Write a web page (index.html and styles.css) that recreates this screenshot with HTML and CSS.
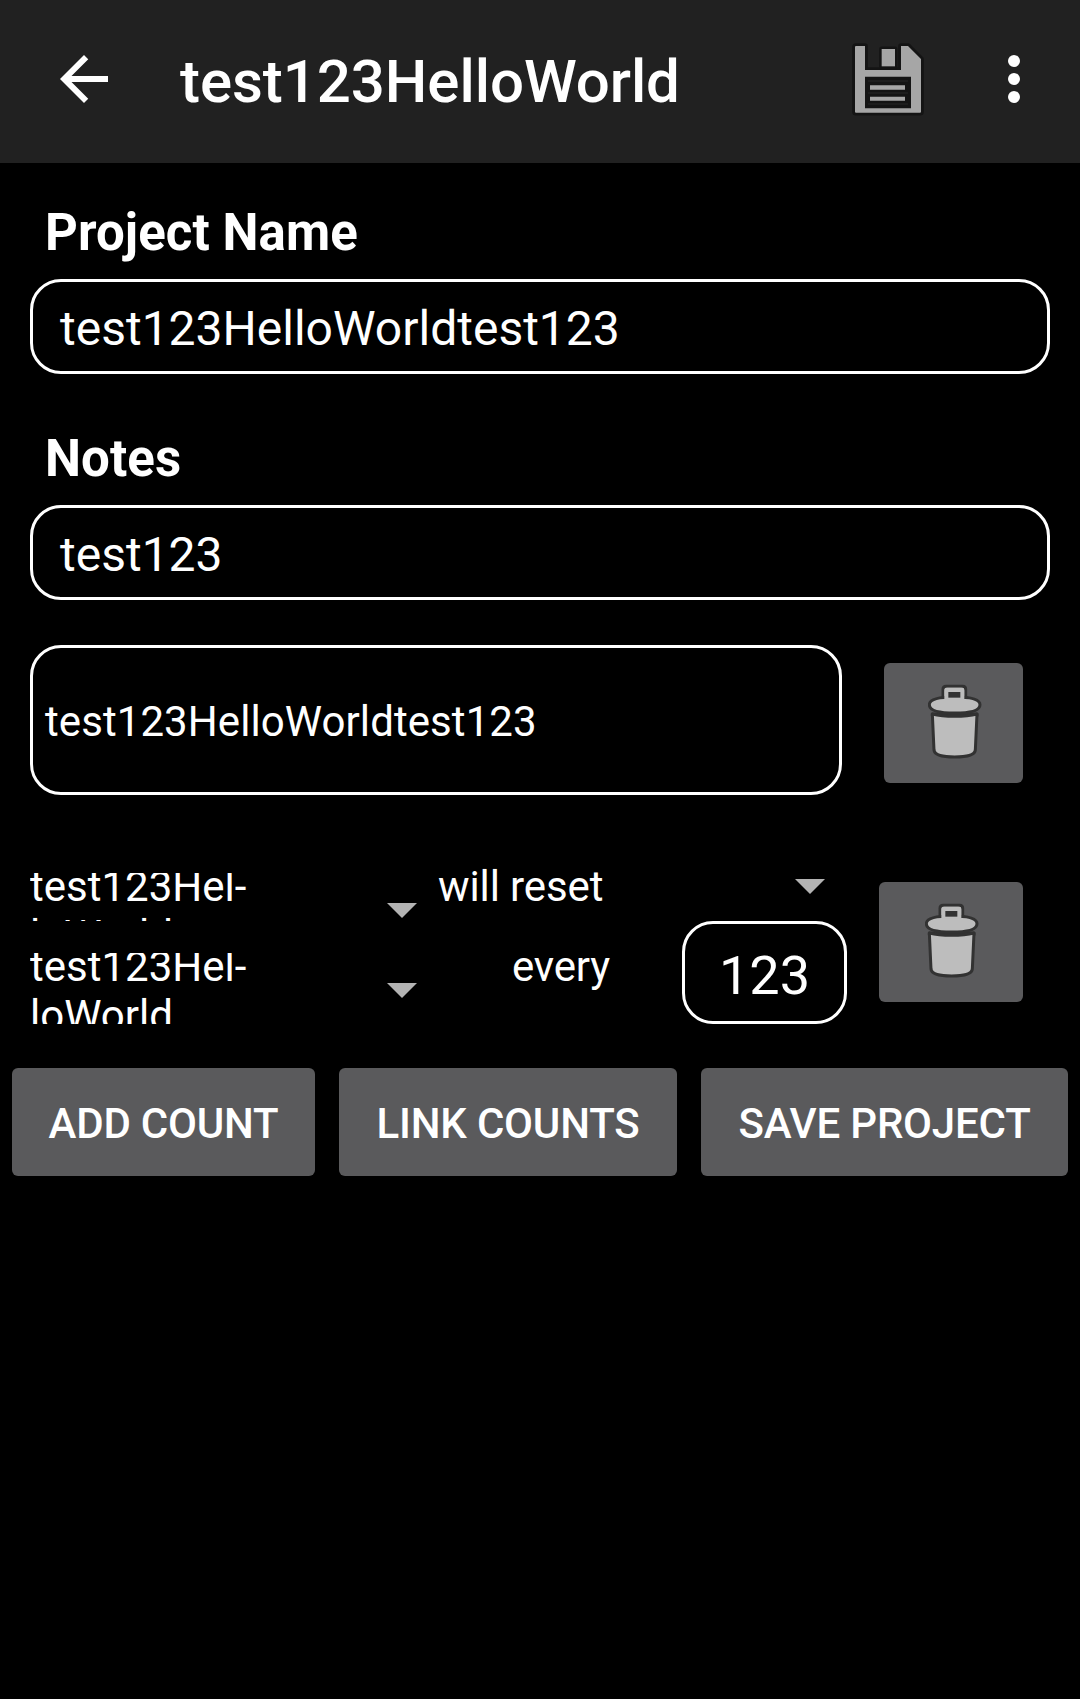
FILE: index.html
```html
<!DOCTYPE html>
<html lang="en">
<head>
<meta charset="utf-8">
<title>test123HelloWorld</title>
<link rel="stylesheet" href="styles.css">
</head>
<body>
<svg class="defs" aria-hidden="true">
  <symbol id="trash" viewBox="0 0 162 225">
    <g stroke="#323232" stroke-width="9" stroke-linejoin="round" fill="#bdbdbd">
      <path fill="#323232" d="M13 90 H147 V95 Q120 100 80 100 Q40 100 13 95Z"/>
      <path d="M13 90 L18 198 Q20 219 80 219 Q140 219 142 198 L147 90 Q120 97 80 97 Q40 97 13 90Z"/>
      <path d="M45 46 V16 Q45 7 54 7 H104 Q113 7 113 16 V46Z"/>
      <path d="M4 62 Q4 39 80 39 Q156 39 156 62 Q156 87 80 87 Q4 87 4 62Z"/>
    </g>
    <path fill="#bdbdbd" d="M49 46 V20 Q49 11 58 11 H100 Q109 11 109 20 V46Z"/>
    <path fill="#323232" d="M61 24H97V41H61Z"/>
  </symbol>
</svg>
<header class="bar">
  <svg class="back" viewBox="0 0 24 24"><path fill="#fff" d="M20 11H7.83l5.59-5.59L12 4l-8 8 8 8 1.41-1.41L7.83 13H20z"/></svg>
  <h1 class="title">test123HelloWorld</h1>
  <svg class="save" viewBox="96 66 216 222">
    <path fill="#a6a6a6" stroke="#141414" stroke-width="17" stroke-linejoin="round" paint-order="stroke" d="M108 78H135V150H243V78H264L303 117V275Q303 278 300 278H108Q105 278 105 275V81Q105 78 108 78Z"/>
    <path fill="#a6a6a6" stroke="#141414" stroke-width="15" stroke-linejoin="round" paint-order="stroke" d="M185 87H225V139H185Z"/>
    <path fill="#141414" d="M135 170H273V265H135Z"/>
    <path fill="none" stroke="#202020" stroke-width="4" d="M144 183H264M144 219H264M144 252H264"/>
    <path fill="#a6a6a6" d="M150 196H255V209H150ZM150 230H255V242H150Z"/>
  </svg>
  <svg class="more" viewBox="0 0 12 48" fill="#fff"><circle cx="6" cy="6" r="6"/><circle cx="6" cy="24" r="6"/><circle cx="6" cy="42" r="6"/></svg>
</header>
<main class="form">
  <h2 class="label">Project Name</h2>
  <div class="field">test123HelloWorldtest123</div>
  <h2 class="label">Notes</h2>
  <div class="field">test123</div>
  <div class="count">
    <div class="count-name">test123HelloWorldtest123</div>
    <div class="delete"><svg class="trash"><use href="#trash"/></svg></div>
  </div>
  <div class="link">
    <div class="rules">
      <div class="rule">
        <div class="spinner"><span class="value">test123Hel-<br>loWorld</span><i class="caret"></i></div>
        <div class="action"><span class="value">will reset</span><i class="caret"></i></div>
      </div>
      <div class="rule rule-every">
        <div class="spinner"><span class="value">test123Hel-<br>loWorld</span><i class="caret"></i></div>
        <span class="every">every</span>
        <div class="number">123</div>
      </div>
    </div>
    <div class="delete delete-wide"><svg class="trash"><use href="#trash"/></svg></div>
  </div>
</main>
<div class="actions">
  <div class="button add">ADD COUNT</div>
  <div class="button links">LINK COUNTS</div>
  <div class="button store">SAVE PROJECT</div>
</div>
</body>
</html>
```
FILE: styles.css
```css
* { box-sizing: border-box; }
body {
  margin: 0;
  min-height: 1699px;
  background: #000;
  color: #fff;
  font-family: Roboto, sans-serif;
  font-size: 42px;
  line-height: 49px;
}
.defs { display: none; }
.bar {
  display: flex;
  align-items: center;
  height: 163px;
  padding: 0 60px 0 48px;
  background: #212121;
}
.back { width: 72px; height: 72px; margin: -5px 60px 0 0; }
.title { flex: 1; margin: 0; font-size: 60px; line-height: 70px; font-weight: 500; letter-spacing: -.06px; }
.save { width: 72px; height: 74px; margin: -5px 84px 0 0; overflow: visible; }
.more { width: 12px; height: 48px; margin-top: -5px; }
.form { padding: 38px 30px 0; }
.label { margin: 0 15px 15px; font-size: 51px; line-height: 63px; font-weight: 700; letter-spacing: .08px; }
.field {
  height: 95px;
  margin-bottom: 53px;
  padding: 1px 27px 0;
  border: 3px solid #fff;
  border-radius: 31px;
  font-size: 48px;
  line-height: 91px;
}
.count { display: flex; align-items: center; margin-top: -8px; height: 150px; }
.count-name {
  width: 812px;
  height: 150px;
  padding: 2px 12px 0;
  border: 3px solid #fff;
  border-radius: 31px;
  line-height: 144px;
  letter-spacing: .08px;
}
.delete {
  display: flex;
  justify-content: center;
  width: 139px;
  height: 120px;
  margin: 6px 0 0 42px;
  padding: 21px 0 0 2px;
  border-radius: 6px;
  background: #5a5a5c;
}
.delete-wide { width: 144px; margin: 9px 0 0 32px; }
.trash { width: 54px; height: 75px; }
.link { display: flex; margin-top: 78px; height: 151px; }
.rules { width: 817px; }
.rule { display: flex; height: 48px; }
.rule-every { height: 103px; }
.spinner { display: flex; flex: none; width: 408px; height: 48px; overflow: hidden; }
.rule-every .spinner { height: 71px; margin-top: 32px; }
.value { flex: none; margin-top: -11px; }
.spinner .value { width: 357px; }
.caret {
  width: 30px;
  height: 15px;
  margin-top: 30px;
  background: #b3b3b3;
  clip-path: polygon(0 0, 100% 0, 50% 100%);
}
.action { display: flex; width: 387px; justify-content: space-between; letter-spacing: -.1px; }
.action .caret { margin-top: 6px; }
.every { flex: none; width: 171px; padding-left: 74px; margin: 21px 73px 0 0; letter-spacing: -.2px; }
.number {
  flex: none;
  width: 165px;
  height: 103px;
  padding-top: 3px;
  border: 3px solid #fff;
  border-radius: 31px;
  font-size: 54px;
  line-height: 97px;
  text-align: center;
}
.actions { display: flex; gap: 24px; padding: 44px 12px 0; }
.button {
  height: 108px;
  border-radius: 6px;
  background: #5a5a5c;
  font-weight: 500;
  line-height: 111px;
  text-align: center;
  letter-spacing: -.2px;
}
.add { width: 303px; }
.links { width: 338px; }
.store { width: 367px; }
```
